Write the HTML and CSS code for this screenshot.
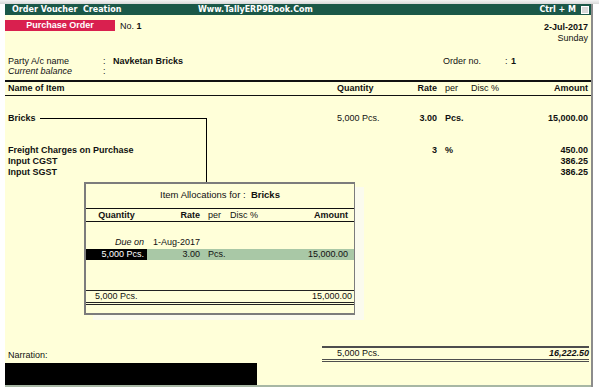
FILE: index.html
```html
<!DOCTYPE html>
<html lang="en">
<head>
  <meta charset="UTF-8" />
  <title>Order Voucher Creation</title>
  <link rel="stylesheet" href="styles.css">
</head>
<body>
  <div class="topstrip"></div>
  <div id="window">
    <div class="titlebar">
      <span class="title-left">Order Voucher&nbsp; Creation</span>
      <span class="title-mid">Www.TallyERP9Book.Com</span>
      <span class="title-right">Ctrl + M</span>
      <span class="title-box"></span>
    </div>

    <div class="main">
      <div class="voucher-head">
        <div class="voucher-left">
          <span class="voucher-type">Purchase Order</span>
          <span class="voucher-no">No. <b>1</b></span>
        </div>
        <div class="voucher-date">
          <div class="date">2-Jul-2017</div>
          <div class="day">Sunday</div>
        </div>
      </div>

      <div class="party">
        <div class="party-row">
          <span>Party A/c name</span>
          <span>:</span>
          <span class="val">Navketan Bricks</span>
          <span>Order no.</span>
          <span>:</span>
          <span class="val">1</span>
        </div>
        <div class="party-row">
          <span class="italic">Current balance</span>
          <span>:</span>
        </div>
      </div>

      <div class="grid-row table-head">
        <span>Name of Item</span>
        <span>Quantity</span>
        <span class="r">Rate</span>
        <span class="per normal">per</span>
        <span class="normal">Disc %</span>
        <span class="r">Amount</span>
      </div>

      <div class="grid-row item-row bold">
        <span>Bricks</span>
        <span class="normal">5,000 Pcs.</span>
        <span class="r">3.00</span>
        <span class="per">Pcs.</span>
        <span></span>
        <span class="r">15,000.00</span>
      </div>

      <div class="ledgers">
        <div class="grid-row bold">
          <span>Freight Charges on Purchase</span>
          <span></span>
          <span class="r">3</span>
          <span class="per">%</span>
          <span></span>
          <span class="r">450.00</span>
        </div>
        <div class="grid-row bold">
          <span>Input CGST</span>
          <span></span><span></span><span></span><span></span>
          <span class="r">386.25</span>
        </div>
        <div class="grid-row bold">
          <span>Input SGST</span>
          <span></span><span></span><span></span><span></span>
          <span class="r">386.25</span>
        </div>
      </div>

      <div class="footer">
        <div class="narration">
          <div class="narr-lbl">Narration:</div>
          <div class="narr-box"></div>
        </div>
        <div class="totals">
          <span>5,000 Pcs.</span>
          <span class="grand">16,222.50</span>
        </div>
      </div>

      <!-- connector from item to allocation popup -->
      <div class="connector"></div>

      <div class="popup">
        <div class="popup-title">Item Allocations for :&nbsp; <b>Bricks</b></div>
        <div class="pop-row pop-head">
          <span class="c">Quantity</span>
          <span class="r">Rate</span>
          <span class="per normal">per</span>
          <span class="normal">Disc %</span>
          <span class="r">Amount</span>
        </div>
        <div class="pop-body">
          <div class="pop-row">
            <span class="r italic">Due on</span>
            <span class="due-date">1-Aug-2017</span>
          </div>
          <div class="pop-row selected">
            <span class="r qty-cell">5,000 Pcs.</span>
            <span class="r">3.00</span>
            <span class="per">Pcs.</span>
            <span></span>
            <span class="r">15,000.00</span>
          </div>
        </div>
        <div class="pop-total">
          <span>5,000 Pcs.</span>
          <span>15,000.00</span>
        </div>
      </div>
    </div>
  </div>
</body>
</html>
```

FILE: styles.css
```css
body {
  margin: 0;
  background: #fff;
  font-family: 'Liberation Sans', Arial, sans-serif;
  font-size: 9px;
  color: #111;
}

.topstrip {
  height: 4px;
  background: linear-gradient(#f4f4f4, #d8d8d8);
}

#window {
  width: 586px;
  margin-left: 5px;
  border-right: 2px solid #8c8c8c;
}

.titlebar {
  display: flex;
  align-items: center;
  height: 11px;
  background: #1b5848;
  color: #fff;
  font-family: 'DejaVu Sans', Verdana, sans-serif;
  font-weight: bold;
  font-size: 8px;
}

.title-left {
  width: 186px;
  padding-left: 7px;
}

.title-mid {
  flex-grow: 1;
}

.title-right {
  margin-right: 5px;
}

.title-box {
  width: 6px;
  height: 6px;
  background: #d8d8d8;
  border: 1px solid #fff;
  margin-right: 2px;
}

.main {
  position: relative;
  height: 370px;
  background: #ffffd9;
  border-bottom: 2px solid #a7b7a4;
  display: flex;
  flex-direction: column;
}

.voucher-head {
  display: flex;
  justify-content: space-between;
  margin-top: 5px;
  height: 31px;
}

.voucher-left {
  display: flex;
  align-items: center;
  height: 11px;
}

.voucher-type {
  width: 110px;
  height: 11px;
  line-height: 11px;
  background: #d9204f;
  color: #fff;
  font-weight: bold;
  text-align: center;
}

.voucher-no {
  margin-left: 5px;
}

.voucher-date {
  text-align: right;
  padding-right: 3px;
  line-height: 11px;
  margin-top: 2px;
}

.date {
  font-weight: bold;
}

.party {
  margin-top: 5px;
  padding-left: 3px;
}

.party-row {
  display: grid;
  grid-template-columns: 95px 10px 330px 62px 6px auto;
  line-height: 10px;
}

.val {
  font-weight: bold;
}

.italic {
  font-style: italic;
}

.bold {
  font-weight: bold;
}

.normal {
  font-weight: normal;
}

.grid-row {
  display: grid;
  grid-template-columns: 329px 63px 37px 34px 39px 78px;
  padding-left: 3px;
  line-height: 11px;
}

.r {
  text-align: right;
}

.c {
  text-align: center;
}

.per {
  padding-left: 8px;
}

.table-head {
  margin-top: 4px;
  border-top: 2px solid #111;
  border-bottom: 1px solid #111;
  font-weight: bold;
  height: 13px;
  line-height: 13px;
}

.item-row {
  margin-top: 17px;
}

.ledgers {
  margin-top: 21px;
}

.footer {
  margin-top: auto;
  display: flex;
  justify-content: space-between;
  align-items: flex-start;
}

.narration {
  width: 252px;
}

.narr-lbl {
  padding-left: 3px;
  line-height: 13px;
  margin-bottom: 1px;
}

.narr-box {
  height: 22px;
  background: #000;
}

.totals {
  width: 252px;
  margin-right: 2px;
  display: flex;
  justify-content: space-between;
  padding-left: 15px;
  line-height: 11px;
  border-top: 2px solid #4e4e4e;
  border-bottom: 3px double #4e4e4e;
  margin-top: -3px;
}

.grand {
  font-weight: bold;
  font-style: italic;
}

.connector {
  position: absolute;
  left: 35px;
  top: 103px;
  width: 166px;
  height: 64px;
  border-top: 1px solid #000;
  border-right: 1px solid #000;
}

.popup {
  position: absolute;
  left: 79px;
  top: 167px;
  width: 268px;
  height: 129px;
  border: 2px solid #7c7c7c;
  border-right-width: 1px;
  background: #ffffd9;
  box-shadow: 9px 5px 0 #fbfbee;
  display: flex;
  flex-direction: column;
}

.popup-title {
  text-align: center;
  font-size: 9.5px;
  line-height: 12px;
  margin-top: 5px;
  height: 15px;
}

.pop-row {
  display: grid;
  grid-template-columns: 61px 53px 30px 40px 80px;
  line-height: 11px;
}

.pop-head {
  margin-top: 4px;
  border-top: 1px solid #111;
  border-bottom: 1px solid #111;
  font-weight: bold;
  height: 12px;
  line-height: 12px;
}

.pop-body {
  padding-top: 15px;
}

.pop-row > span.r:first-child {
  padding-right: 3px;
}

.pop-row > span:last-child.r {
  padding-right: 2px;
}

.due-date {
  padding-left: 6px;
  grid-column: 2 / 4;
}

.selected {
  background: #a9c8a6;
  margin-top: 1px;
}

.qty-cell {
  background: #000;
  color: #fff;
}

.pop-total {
  margin-top: auto;
  margin-bottom: 8px;
  display: flex;
  justify-content: space-between;
  padding: 0 2px 0 9px;
  line-height: 11px;
  border-top: 1px solid #222;
  border-bottom: 3px double #222;
}
```
